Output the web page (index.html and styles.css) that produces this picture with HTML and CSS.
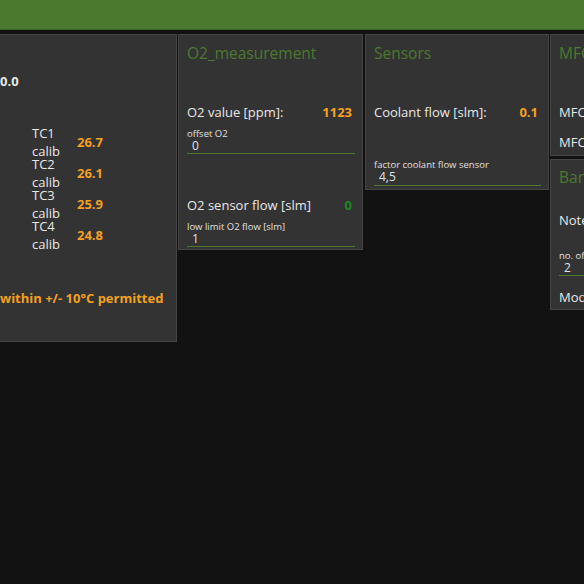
FILE: index.html
```html
<!DOCTYPE html>
<html>
    <head>
        <meta charset="utf-8" />
        <title>Dashboard</title>
        <link rel="stylesheet" href="styles.css">
    </head>
    <body>
        <div class="topbar"></div>
        <div class="board">
            <div class="card card-temp">
                <div class="total">0.0</div>
                <div class="tc-list">
                    <div class="tc-row">
                        <div class="tc-name">TC1<br>calib</div>
                        <div class="val">26.7</div>
                    </div>
                    <div class="tc-row">
                        <div class="tc-name">TC2<br>calib</div>
                        <div class="val">26.1</div>
                    </div>
                    <div class="tc-row">
                        <div class="tc-name">TC3<br>calib</div>
                        <div class="val">25.9</div>
                    </div>
                    <div class="tc-row">
                        <div class="tc-name">TC4<br>calib</div>
                        <div class="val">24.8</div>
                    </div>
                </div>
                <div class="warn">within +/- 10°C permitted</div>
            </div>

            <div class="card card-o2">
                <div class="title">O2_measurement</div>
                <div class="row first">
                    <span>O2 value [ppm]:</span>
                    <span class="val">1123</span>
                </div>
                <div class="field">
                    <label>offset O2</label>
                    <div class="input">0</div>
                </div>
                <div class="row second">
                    <span>O2 sensor flow [slm]</span>
                    <span class="val ok">0</span>
                </div>
                <div class="field">
                    <label>low limit O2 flow [slm]</label>
                    <div class="input">1</div>
                </div>
            </div>

            <div class="card card-sensors">
                <div class="title">Sensors</div>
                <div class="row first">
                    <span>Coolant flow [slm]:</span>
                    <span class="val">0.1</span>
                </div>
                <div class="field far">
                    <label>factor coolant flow sensor</label>
                    <div class="input">4,5</div>
                </div>
            </div>

            <div class="stack">
                <div class="card card-mfc">
                    <div class="title">MFC</div>
                    <div class="row first">
                        <span>MFC</span>
                    </div>
                    <div class="row">
                        <span>MFC</span>
                    </div>
                </div>
                <div class="card card-bar">
                    <div class="title">Bar</div>
                    <div class="row note">
                        <span>Note</span>
                    </div>
                    <div class="field">
                        <label>no. of</label>
                        <div class="input">2</div>
                    </div>
                    <div class="row mode">
                        <span>Mode</span>
                    </div>
                </div>
            </div>
        </div>
    </body>
</html>
```

FILE: styles.css
```css
* {
    margin: 0;
    padding: 0;
    box-sizing: border-box;
}
html, body {
    width: 584px;
    height: 584px;
    overflow: hidden;
}
body {
    background: #121212;
    color: #e8e8e8;
    font-family: "Open Sans", "Noto Sans", sans-serif;
    font-size: 13px;
}

.topbar {
    height: 30px;
    background: #4b7a2f;
    border-bottom: 1px solid #3c6326;
}
.board {
    display: flex;
    align-items: flex-start;
    margin-top: 4px;
    margin-left: -20px;
}
.card {
    background: #333333;
    border: 1px solid #454545;
    padding: 0 7px 2px 8px;
    flex-shrink: 0;
}
.title {
    color: #4b7a2f;
    font-size: 15.5px;
    line-height: 20px;
    margin-top: 8px;
}
.row {
    display: flex;
    justify-content: space-between;
    align-items: center;
    line-height: 18px;
    padding-right: 3px;
}
.row.first {
    margin-top: 40px;
}
.row.second {
    margin-top: 42px;
}
.val {
    color: #f5a01e;
    font-weight: bold;
}
.val.ok {
    color: #1e8a1e;
}
.field {
    margin-top: 7px;
}
.field.far {
    margin-top: 38px;
}
.field label {
    display: block;
    font-size: 9.5px;
    line-height: 11px;
    color: #e0e0e0;
}
.input {
    font-size: 12px;
    line-height: 14px;
    padding-left: 5px;
    color: #dde6ec;
    border-bottom: 1px solid #4b7a2f;
}

/* temperatures */
.card-temp {
    width: 197px;
    height: 308px;
    padding-left: 19px;
}
.total {
    font-weight: bold;
    margin-top: 37px;
    line-height: 18px;
}
.tc-list {
    margin-top: 36px;
    padding-left: 32px;
}
.tc-row {
    display: flex;
    align-items: center;
    height: 31px;
}
.tc-name {
    width: 45px;
    line-height: 18px;
}
.warn {
    color: #f5a01e;
    font-weight: bold;
    margin-top: 39px;
    line-height: 18px;
    white-space: nowrap;
}

.card-o2 {
    width: 185px;
    margin-left: 1px;
}
.card-sensors {
    width: 184px;
    margin-left: 2px;
    padding-bottom: 3px;
}
.card-sensors .input {
    padding-bottom: 1px;
}
.stack {
    display: flex;
    flex-direction: column;
    gap: 3px;
    margin-left: 1px;
}
.card-mfc {
    width: 120px;
    height: 122px;
}
.card-mfc .row + .row {
    margin-top: 12px;
}
.card-bar {
    width: 120px;
    height: 151px;
}
.card-bar .title {
    margin-top: 7px;
}
.row.note {
    margin-top: 24px;
}
.card-bar .field {
    margin-top: 21px;
}
.row.mode {
    margin-top: 12px;
}
```
